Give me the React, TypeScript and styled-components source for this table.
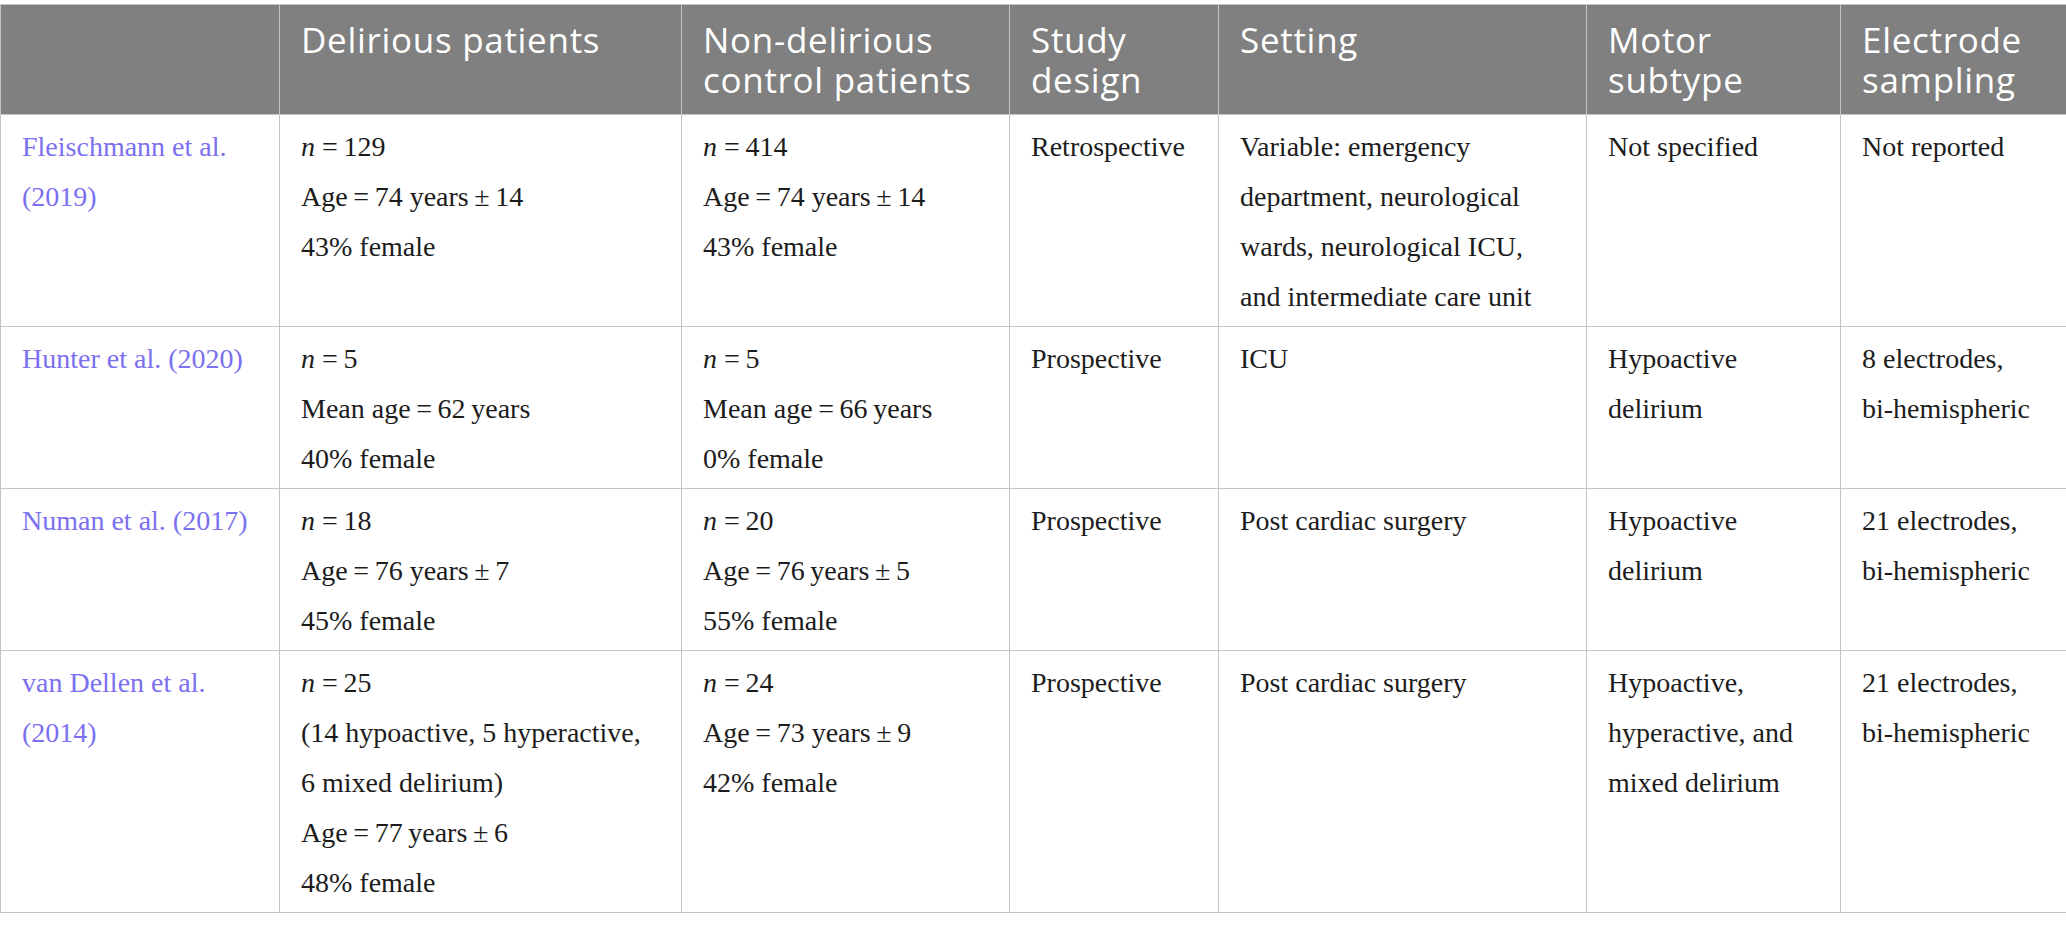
import React from "react";
import styled, { createGlobalStyle } from "styled-components";

const GlobalStyle = createGlobalStyle`
  html, body { margin: 0; padding: 0; background: #ffffff; }
  body { font-family: "Liberation Serif", "Times New Roman", serif; }
`;

const Page = styled.div`
  padding-top: 4px;
  width: 2066px;
`;

const Table = styled.table`
  width: 2066px;
  table-layout: fixed;
  border-collapse: collapse;
  border: 1px solid #c4c4c4;
`;

const HeadCell = styled.th`
  background: #808080;
  color: #ffffff;
  font-family: "Open Sans", "Noto Sans", sans-serif;
  font-weight: 400;
  font-size: 35px;
  letter-spacing: 0.7px;
  line-height: 40px;
  text-align: left;
  vertical-align: top;
  padding: 15px 8px 14px 21px;
  border: 1px solid #c4c4c4;
`;

const Cell = styled.td`
  vertical-align: top;
  padding: 7px 10px 4px 21px;
  border: 1px solid #c4c4c4;
  font-family: "Liberation Serif", "Times New Roman", serif;
  font-size: 28px;
  line-height: 50px;
  color: #1c1c1c;
`;

const Line = styled.div`
  white-space: nowrap;
`;

const RefLink = styled.a`
  color: #7b70ef;
  text-decoration: none;
  display: block;
`;

const Ital = styled.i`
  font-style: italic;
`;

const T = "\u2009";

type Row = {
  study: string[];
  delirious: React.ReactNode[];
  control: React.ReactNode[];
  design: string[];
  setting: string[];
  motor: string[];
  electrode: string[];
};

const nLine = (v: string) => (
  <>
    <Ital>n</Ital> ={T}
    {v}
  </>
);

const rows: Row[] = [
  {
    study: ["Fleischmann et al.", "(2019)"],
    delirious: [nLine("129"), `Age${T}=${T}74 years${T}±${T}14`, "43% female"],
    control: [nLine("414"), `Age${T}=${T}74 years${T}±${T}14`, "43% female"],
    design: ["Retrospective"],
    setting: [
      "Variable: emergency",
      "department, neurological",
      "wards, neurological ICU,",
      "and intermediate care unit",
    ],
    motor: ["Not specified"],
    electrode: ["Not reported"],
  },
  {
    study: ["Hunter et al. (2020)"],
    delirious: [nLine("5"), `Mean age${T}=${T}62${T}years`, "40% female"],
    control: [nLine("5"), `Mean age${T}=${T}66${T}years`, "0% female"],
    design: ["Prospective"],
    setting: ["ICU"],
    motor: ["Hypoactive", "delirium"],
    electrode: ["8 electrodes,", "bi-hemispheric"],
  },
  {
    study: ["Numan et al. (2017)"],
    delirious: [nLine("18"), `Age${T}=${T}76 years${T}±${T}7`, "45% female"],
    control: [nLine("20"), `Age${T}=${T}76${T}years${T}±${T}5`, "55% female"],
    design: ["Prospective"],
    setting: ["Post cardiac surgery"],
    motor: ["Hypoactive", "delirium"],
    electrode: ["21 electrodes,", "bi-hemispheric"],
  },
  {
    study: ["van Dellen et al.", "(2014)"],
    delirious: [
      nLine("25"),
      "(14 hypoactive, 5 hyperactive,",
      "6 mixed delirium)",
      `Age${T}=${T}77${T}years${T}±${T}6`,
      "48% female",
    ],
    control: [nLine("24"), `Age${T}=${T}73 years${T}±${T}9`, "42% female"],
    design: ["Prospective"],
    setting: ["Post cardiac surgery"],
    motor: ["Hypoactive,", "hyperactive, and", "mixed delirium"],
    electrode: ["21 electrodes,", "bi-hemispheric"],
  },
];

const columns: { width: number; title: string[] }[] = [
  { width: 279, title: [] },
  { width: 402, title: ["Delirious patients"] },
  { width: 328, title: ["Non-delirious", "control patients"] },
  { width: 209, title: ["Study", "design"] },
  { width: 368, title: ["Setting"] },
  { width: 254, title: ["Motor", "subtype"] },
  { width: 226, title: ["Electrode", "sampling"] },
];

const Lines = ({ items }: { items: React.ReactNode[] }) => (
  <>
    {items.map((it, i) => (
      <Line key={i}>{it}</Line>
    ))}
  </>
);

export default function App() {
  return (
    <>
      <GlobalStyle />
      <Page>
        <Table>
          <colgroup>
            {columns.map((c, i) => (
              <col key={i} style={{ width: c.width }} />
            ))}
          </colgroup>
          <thead>
            <tr>
              {columns.map((c, i) => (
                <HeadCell key={i}>
                  {c.title.map((t, j) => (
                    <Line key={j}>{t}</Line>
                  ))}
                </HeadCell>
              ))}
            </tr>
          </thead>
          <tbody>
            {rows.map((r, i) => (
              <tr key={i}>
                <Cell>
                  <RefLink href="#">
                    <Lines items={r.study} />
                  </RefLink>
                </Cell>
                <Cell>
                  <Lines items={r.delirious} />
                </Cell>
                <Cell>
                  <Lines items={r.control} />
                </Cell>
                <Cell>
                  <Lines items={r.design} />
                </Cell>
                <Cell>
                  <Lines items={r.setting} />
                </Cell>
                <Cell>
                  <Lines items={r.motor} />
                </Cell>
                <Cell>
                  <Lines items={r.electrode} />
                </Cell>
              </tr>
            ))}
          </tbody>
        </Table>
      </Page>
    </>
  );
}
